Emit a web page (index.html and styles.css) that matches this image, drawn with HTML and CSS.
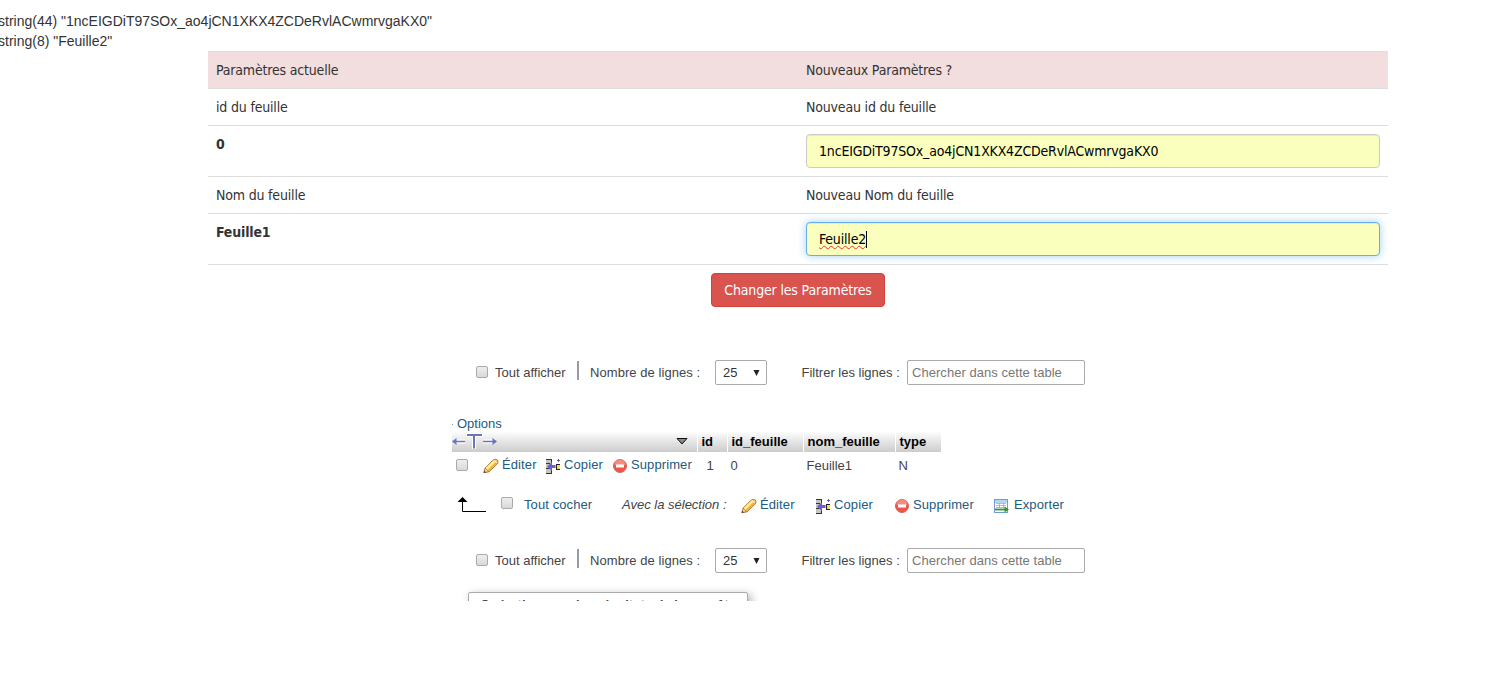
FILE: index.html
```html
<!DOCTYPE html>
<html lang="fr">
<head>
    <meta charset="UTF-8">
    <meta name="viewport" content="width=device-width, initial-scale=1.0">
    <title>Paramètres</title>
    <link rel="stylesheet" href="styles.css">
</head>
<body>
    <!-- Icons -->
    <svg class="sprites" width="0" height="0">
        <symbol id="edit" viewBox="0 0 16 16">
            <path d="M1 14.500 L2.200 10 L10 2.200 Q12.500 .4 14.400 2 Q15.800 4 14.200 6 L6 13.800 Z" fill="#f8cf58" stroke="#b5762b"/>
            <path d="M3.600 10.800 L11.600 3" stroke="#fff0a0" stroke-width="2"/>
            <path d="M5.400 12.600 L13.400 4.800" stroke="#eea637" stroke-width="1.200"/>
            <path d="M1 14.500 L2.200 10.400 L5.600 13.600 Z" fill="#f3dcc0" stroke="#a5703c" stroke-width=".7"/>
            <path d="M.6 15 L1.200 12.800 L2.800 14.400 Z" fill="#553322"/>
            <path d="M11.200 2.200 L13.800 4.800" stroke="#f7dfca" stroke-width="1.400"/>
        </symbol>
        <symbol id="copy" viewBox="0 0 16 16">
            <path d="M1 1h6v4H1zM1 6h6v4H1zM1 11h6v4H1z" fill="#c4c4c4"/>
            <path d="M1 1h6v1H1zM6 1h1v4H6zM1 5h4v1H1zM1 10h4v1H1zM6 11h1v4H6zM1 15h6v1H1z" fill="#333"/>
            <path d="M2 8.500l5-4.500v3h3.500v3H7v3z" fill="#6a5fd0"/>
            <path d="M11 6h4v6h-4z" fill="#222"/>
            <path d="M12 7h3v4h-3z" fill="#ffd84d"/>
            <path d="M13.500 1v3M12 2.500h3" stroke="#6a5fd0"/>
        </symbol>
        <symbol id="drop" viewBox="0 0 16 16">
            <circle cx="8" cy="8" r="6.500" fill="#ee5548" stroke="#d5685f"/>
            <path d="M2.500 7a5.500 5.500 0 0 1 11 0z" fill="#f58c80"/>
            <rect x="4" y="6.500" width="8" height="3" fill="#fff"/>
        </symbol>
        <symbol id="export" viewBox="0 0 16 16">
            <rect x="1.500" y="1.500" width="13" height="13" fill="#fff" stroke="#6f9fd0"/>
            <path d="M2 2h12v3H2z" fill="#b5d5f2"/>
            <path d="M3 5.500h10M3 7.500h10M3 9.500h10M6.500 5v5M10.500 5v5" stroke="#7aaade" stroke-width=".7"/>
            <path d="M2 11.500h10" stroke="#3c8d3a" stroke-width="1.800"/>
            <path d="M11.500 8.500l4.500 3-4.500 3z" fill="#3c8d3a"/>
        </symbol>
    </svg>

    <div class="dump">string(44) "1ncEIGDiT97SOx_ao4jCN1XKX4ZCDeRvlACwmrvgaKX0"</div>
    <div class="dump">string(8) "Feuille2"</div>

    <form class="settings">
        <table class="table">
            <tr class="danger"><td>Paramètres actuelle</td><td>Nouveaux Paramètres ?</td></tr>
            <tr><td>id du feuille</td><td>Nouveau id du feuille</td></tr>
            <tr>
                <th>0</th>
                <td><div class="form-control"><span>1ncEIGDiT97SOx_ao4jCN1XKX4ZCDeRvlACwmrvgaKX0</span></div></td>
            </tr>
            <tr><td>Nom du feuille</td><td>Nouveau Nom du feuille</td></tr>
            <tr>
                <th>Feuille1</th>
                <td><div class="form-control focused"><span class="misspelled">Feuille2</span><span class="caret"></span></div></td>
            </tr>
        </table>
        <div class="submit-row"><button type="button" class="btn">Changer les Paramètres</button></div>
    </form>

    <!-- Database table view -->
    <div class="browse">
        <div class="nav-bar">
            <span class="box"></span>
            <span class="show-all">Tout afficher</span>
            <span class="divider"></span>
            <span class="row-count">Nombre de lignes :</span>
            <span class="select">25<svg width="7" height="7"><path d="M.5 1h6L3.500 7z" fill="#222"/></svg></span>
            <span class="filter-label">Filtrer les lignes :</span>
            <span class="search">Chercher dans cette table</span>
        </div>

        <div class="options">Options</div>

        <div class="grid head">
            <div class="sort-cell">
                <svg width="46" height="17" viewBox="0 0 46 17">
                    <path d="M1 8.500h12M31 8.500h13M14 2h17M22 2v14" fill="none" stroke="#fff" stroke-width="4"/>
                    <path d="M1 8.500h12M31 8.500h13" stroke="#6b76b5" stroke-width="1.300"/>
                    <path d="M0 8.500l4.500-3.500v7zM45 8.500l-4.500-3.500v7z" fill="#6b76b5"/>
                    <path d="M15 2h15M22 2v13.500" fill="none" stroke="#6b76b5" stroke-width="2"/>
                </svg>
                <svg class="arrow" width="12" height="7"><path d="M1 .5h10L6 6z" fill="#888" stroke="#111"/></svg>
            </div>
            <div>id</div>
            <div>id_feuille</div>
            <div>nom_feuille</div>
            <div>type</div>
        </div>
        <div class="grid row">
            <div class="actions">
                <span class="box"></span>
                <a class="edit"><svg><use href="#edit"/></svg>Éditer</a>
                <a class="copy"><svg><use href="#copy"/></svg>Copier</a>
                <a class="drop"><svg><use href="#drop"/></svg>Supprimer</a>
            </div>
            <div class="num">1</div>
            <div>0</div>
            <div>Feuille1</div>
            <div>N</div>
        </div>

        <div class="with-selected">
            <svg class="elbow" width="28" height="16"><path d="M4.500 2v12.500H28" fill="none" stroke="#000"/><path d="M4.500 0L9.500 5h-10z"/></svg>
            <span class="box"></span>
            <a class="check-all">Tout cocher</a>
            <em>Avec la sélection :</em>
            <a class="edit"><svg><use href="#edit"/></svg>Éditer</a>
            <a class="copy"><svg><use href="#copy"/></svg>Copier</a>
            <a class="drop"><svg><use href="#drop"/></svg>Supprimer</a>
            <a class="export"><svg><use href="#export"/></svg>Exporter</a>
        </div>

        <div class="nav-bar">
            <span class="box"></span>
            <span class="show-all">Tout afficher</span>
            <span class="divider"></span>
            <span class="row-count">Nombre de lignes :</span>
            <span class="select">25<svg width="7" height="7"><path d="M.5 1h6L3.500 7z" fill="#222"/></svg></span>
            <span class="filter-label">Filtrer les lignes :</span>
            <span class="search">Chercher dans cette table</span>
        </div>

        <div class="operations">Opérations sur les résultats de la requête</div>
    </div>
</body>
</html>
```
FILE: styles.css
```css
* {
    box-sizing: border-box;
}

body {
    margin: 0;
    padding-top: 11px;
    background: #fff;
    color: #333;
    font: 14px/20px "DejaVu Sans Condensed", "DejaVu Sans", sans-serif;
    font-stretch: condensed;
    overflow: hidden;
}

.sprites {
    display: block;
}

.dump {
    margin-left: -2px;
    font-family: "Liberation Sans", Arial, sans-serif;
    white-space: nowrap;
}

/* Settings form */
.settings {
    width: 1180px;
    margin-left: 208px;
}

.table {
    width: 100%;
    border-collapse: separate;
    border-spacing: 0;
    table-layout: fixed;
    border-bottom: 1px solid #ddd;
    letter-spacing: -0.18px;
}

.table td,
.table th {
    padding: 8px;
    border-top: 1px solid #ddd;
    text-align: left;
    vertical-align: top;
}

.danger {
    background: #f2dede;
}

.form-control {
    display: flex;
    align-items: center;
    height: 34px;
    padding: 0 12px;
    border: 1px solid #ccc;
    border-radius: 4px;
    background: #faffbd;
    box-shadow: inset 0 1px 1px rgba(0, 0, 0, .075);
    color: #000;
}

.form-control.focused {
    border-color: #66afe9;
    box-shadow: inset 0 1px 1px rgba(0, 0, 0, .075), 0 0 8px rgba(102, 175, 233, .6);
}

.misspelled {
    text-decoration: underline wavy #e33 1px;
    text-decoration-skip-ink: none;
    text-underline-offset: 1px;
}

.caret {
    width: 1px;
    height: 17px;
    background: #000;
}

.submit-row {
    padding-top: 8px;
    text-align: center;
}

.btn {
    display: block;
    width: 174px;
    height: 34px;
    margin: 0 auto;
    padding: 0;
    border: 1px solid #d43f3a;
    border-radius: 4px;
    background: #d9534f;
    color: #fff;
    font: inherit;
    letter-spacing: -0.16px;
}

/* Database table view */
.browse {
    width: 660px;
    height: 294px;
    margin-left: 448px;
    padding-left: 4px;
    overflow: hidden;
    color: #444;
    font: 13px/20px "Liberation Sans", Arial, sans-serif;
    white-space: nowrap;
}

.browse a {
    display: flex;
    align-items: center;
    color: #235a81;
    letter-spacing: 0.1px;
}

.browse a svg {
    width: 16px;
    height: 16px;
    margin: 1px 3px 0 0;
}

.box {
    width: 12px;
    height: 12px;
    border: 1px solid #aaa;
    border-radius: 2px;
    background: linear-gradient(#eee, #d9d9d9);
}

.nav-bar {
    display: flex;
    align-items: center;
    height: 25px;
    margin-top: 53px;
    padding-left: 24px;
}

.nav-bar .box {
    margin-top: -1px;
}

.show-all {
    width: 90px;
    padding-left: 7px;
}

.divider {
    width: 2px;
    height: 19px;
    margin-top: -4px;
    margin-left: -1px;
    background: #99a;
}

.row-count {
    width: 137px;
    padding-left: 11px;
    letter-spacing: 0.06px;
}

.select {
    display: flex;
    align-items: center;
    justify-content: space-between;
    width: 52px;
    height: 25px;
    margin-left: -1px;
    padding: 0 6px 0 7px;
    border: 1px solid #aaa;
    border-radius: 2px;
    color: #333;
}

.filter-label {
    width: 140px;
    padding-left: 34.5px;
}

.search {
    width: 178px;
    height: 25px;
    padding-left: 4px;
    border: 1px solid #aaa;
    border-radius: 2px;
    color: #777;
    letter-spacing: 0.04px;
    line-height: 23px;
}

.options {
    display: flex;
    height: 18px;
    margin-top: 28px;
    color: #235a81;
    line-height: 22px;
}

.options::before {
    content: "";
    width: 1px;
    height: 1px;
    margin: 11px 4px 0 0;
    background: #7a9cb3;
}

.grid {
    display: grid;
    grid-template-columns: 245px 29px 75px 91px 45px;
    column-gap: 1px;
}

.head {
    height: 21px;
    color: #000;
    font-weight: bold;
    line-height: 20px;
}

.head > div {
    padding: 1px 0 0 3.5px;
    background: linear-gradient(#fff, #ccc);
}

.head > .sort-cell {
    display: flex;
    align-items: center;
    justify-content: space-between;
    padding: 0 9px 0 0;
}

.row {
    height: 26px;
    line-height: 28px;
}

.row > div {
    padding-left: 2.5px;
}

.row > .num {
    padding-left: 8.5px;
}

.row > .actions {
    height: 26px;
    padding-left: 2px;
    line-height: 26px;
}

.actions,
.with-selected {
    display: flex;
    align-items: center;
}

.actions .box {
    margin-left: 2px;
}

.actions .edit {
    width: 62px;
    margin-left: 15px;
}

.actions .copy {
    width: 67px;
}

.with-selected {
    height: 20px;
    margin-top: 17px;
    padding-left: 6px;
}

.with-selected .box {
    margin-left: 15px;
    margin-top: -4px;
}

.check-all {
    width: 109px;
    padding-left: 11px;
}

.with-selected em {
    width: 119px;
}

.with-selected .edit {
    width: 74px;
}

.with-selected .copy {
    width: 79px;
}

.with-selected .drop {
    width: 99px;
}

.browse .export svg {
    margin-right: 5px;
}

.with-selected + .nav-bar {
    margin-top: 33px;
}

.operations {
    width: 280px;
    height: 40px;
    margin: 19px 0 0 16px;
    padding: 2px 0 0 11px;
    border: 1px solid #aaa;
    border-radius: 2px;
    box-shadow: 3px 3px 10px #aaa;
    font-weight: bold;
}
```
